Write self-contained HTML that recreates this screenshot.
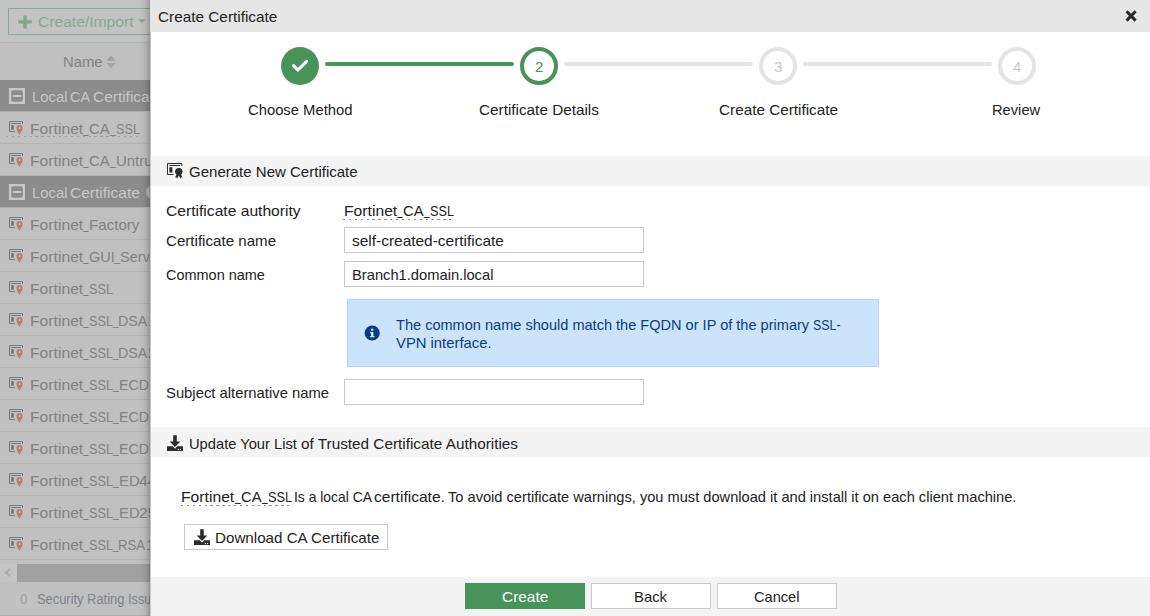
<!DOCTYPE html>
<html><head><meta charset="utf-8"><title>Create Certificate</title>
<style>
html,body{margin:0;padding:0}
body{width:1150px;height:616px;position:relative;overflow:hidden;background:#fff;font-family:"Liberation Sans",sans-serif;font-size:15px;color:#222}
.a{position:absolute}
.t{position:absolute;white-space:nowrap;transform-origin:0 0;line-height:20px;display:block}
#left{left:0;top:0;width:150px;height:616px;background:#c0c0c0;overflow:hidden}
#dlg{left:150px;top:0;width:1000px;height:616px;background:#fff}
.inp{position:absolute;left:344px;width:298px;height:24px;border:1px solid #c9c9c9;background:#fff}
.btn{position:absolute;top:583px;width:118px;height:24px;border:1px solid #c9c9c9;background:#fff}
.sech{position:absolute;left:151px;width:999px;height:30px;background:#f4f4f4}
.dot{position:absolute;height:1px;--c:#8a8a8a;background:repeating-linear-gradient(90deg,var(--c) 0,var(--c) 2.3px,transparent 2.3px,transparent 5.9px)}
</style></head><body>

<div id="left" class="a">
<div class="a" style="left:0;top:0;width:150px;height:42px;background:#c3c3c3"></div>
<div class="a" style="left:0;top:42px;width:150px;height:1px;background:#b3b3b3"></div>
<div class="a" style="left:0;top:43px;width:150px;height:37px;background:#bfbfbf"></div>
<div class="a" style="left:8px;top:8px;width:160px;height:25px;border:1px solid #89a790"></div>
<svg class="a" style="left:18px;top:14.5px" width="14" height="14" viewBox="0 0 14 14"><path d="M5.3 0.5H8.8V5.3H13.7V8.6H8.8V13.4H5.3V8.6H0.3V5.3H5.3Z" fill="#85a48f"/></svg>
<svg class="a" style="left:138px;top:18.5px" width="8" height="5" viewBox="0 0 8 5"><path d="M0 0.3H7.6L3.8 4.1Z" fill="#89a893"/></svg>
<svg class="a" style="left:106px;top:55px" width="10" height="14" viewBox="0 0 10 14"><path d="M5 0.6L9.8 5.8H0.2Z" fill="#a0a0a0"/><path d="M5 13.6L9.8 8H0.2Z" fill="#a4a4a4"/></svg>
<div class="a" style="left:0;top:80px;width:150px;height:31px;background:#8c8c8c"></div>
<div class="a" style="left:0;top:111px;width:150px;height:1px;background:#b0b0b0"></div>
<svg class="a" style="left:9px;top:88px" width="16" height="16" viewBox="0 0 16 16"><path d="M0 0H16V16H0Z M4 2.2A1.8 1.8 0 0 0 2.2 4V12A1.8 1.8 0 0 0 4 13.8H12A1.8 1.8 0 0 0 13.8 12V4A1.8 1.8 0 0 0 12 2.2Z" fill="#c8c8c8" fill-rule="evenodd"/><rect x="3.9" y="7" width="8.3" height="2" fill="#c8c8c8"/></svg>
<span class="t" style="left:32.16px;top:87.00px;color:#c8c8c8;font-size:15px;transform:scaleX(0.9910)">Local</span>
<span class="t" style="left:69.68px;top:87.00px;color:#c8c8c8;font-size:15px;transform:scaleX(0.9600)">CA</span>
<span class="t" style="left:92.83px;top:87.00px;color:#c8c8c8;font-size:15px;transform:scaleX(1.0300)">Certificate</span>
<div class="a" style="left:0;top:143px;width:150px;height:1px;background:#b5b5b5"></div>
<svg class="a" style="left:9px;top:121px" width="16" height="16" viewBox="0 0 16 16"><path d="M13.5 3V0.5H0.5V10.5H6" fill="none" stroke="#7b7b7b" stroke-width="1"/><rect x="2" y="2" width="10" height="1" fill="#7b7b7b"/><rect x="2.1" y="4.2" width="2.8" height="4.6" fill="#7b7b7b"/><path d="M10.5 3.9 a3.2 3.2 0 0 1 3.2 3.2 c0 2.2 -3.2 6.8 -3.2 6.8 c0 0 -3.2 -4.6 -3.2 -6.8 a3.2 3.2 0 0 1 3.2 -3.2z M10.5 5.9 a1.1 1.1 0 1 0 0 2.2 a1.1 1.1 0 0 0 0 -2.2z" fill="#b97e79" fill-rule="evenodd"/></svg>
<span class="t" style="left:29.79px;top:119.00px;color:#828282;font-size:15px;transform:scaleX(1.0465)">Fortinet</span>
<span class="t" style="left:83.36px;top:118.00px;color:#828282;font-size:15px;transform:scaleX(0.6514)">_</span>
<span class="t" style="left:89.16px;top:119.00px;color:#828282;font-size:15px;transform:scaleX(0.9900)">CA</span>
<span class="t" style="left:110.07px;top:118.00px;color:#828282;font-size:15px;transform:scaleX(0.6743)">_</span>
<span class="t" style="left:115.86px;top:119.00px;color:#828282;font-size:15px;transform:scaleX(0.8481)">SSL</span>
<div class="a" style="left:0;top:175px;width:150px;height:1px;background:#b5b5b5"></div>
<svg class="a" style="left:9px;top:153px" width="16" height="16" viewBox="0 0 16 16"><path d="M13.5 3V0.5H0.5V10.5H6" fill="none" stroke="#7b7b7b" stroke-width="1"/><rect x="2" y="2" width="10" height="1" fill="#7b7b7b"/><rect x="2.1" y="4.2" width="2.8" height="4.6" fill="#7b7b7b"/><path d="M10.5 3.9 a3.2 3.2 0 0 1 3.2 3.2 c0 2.2 -3.2 6.8 -3.2 6.8 c0 0 -3.2 -4.6 -3.2 -6.8 a3.2 3.2 0 0 1 3.2 -3.2z M10.5 5.9 a1.1 1.1 0 1 0 0 2.2 a1.1 1.1 0 0 0 0 -2.2z" fill="#b97e79" fill-rule="evenodd"/></svg>
<span class="t" style="left:29.79px;top:151.00px;color:#828282;font-size:15px;transform:scaleX(1.0465)">Fortinet</span>
<span class="t" style="left:83.36px;top:150.00px;color:#828282;font-size:15px;transform:scaleX(0.6514)">_</span>
<span class="t" style="left:89.16px;top:151.00px;color:#828282;font-size:15px;transform:scaleX(0.9900)">CA</span>
<span class="t" style="left:110.07px;top:150.00px;color:#828282;font-size:15px;transform:scaleX(0.6743)">_</span>
<span class="t" style="left:115.76px;top:151.00px;color:#828282;font-size:15px;transform:scaleX(0.9950)">Untrusted</span>
<div class="a" style="left:0;top:176px;width:150px;height:31px;background:#8c8c8c"></div>
<div class="a" style="left:0;top:207px;width:150px;height:1px;background:#b0b0b0"></div>
<svg class="a" style="left:9px;top:184px" width="16" height="16" viewBox="0 0 16 16"><path d="M0 0H16V16H0Z M4 2.2A1.8 1.8 0 0 0 2.2 4V12A1.8 1.8 0 0 0 4 13.8H12A1.8 1.8 0 0 0 13.8 12V4A1.8 1.8 0 0 0 12 2.2Z" fill="#c8c8c8" fill-rule="evenodd"/><rect x="3.9" y="7" width="8.3" height="2" fill="#c8c8c8"/></svg>
<span class="t" style="left:32.16px;top:183.00px;color:#c8c8c8;font-size:15px;transform:scaleX(0.9910)">Local</span>
<span class="t" style="left:70.42px;top:183.00px;color:#c8c8c8;font-size:15px;transform:scaleX(1.0348)">Certificate</span>
<div class="a" style="left:0;top:239px;width:150px;height:1px;background:#b5b5b5"></div>
<svg class="a" style="left:9px;top:217px" width="16" height="16" viewBox="0 0 16 16"><path d="M13.5 3V0.5H0.5V10.5H6" fill="none" stroke="#7b7b7b" stroke-width="1"/><rect x="2" y="2" width="10" height="1" fill="#7b7b7b"/><rect x="2.1" y="4.2" width="2.8" height="4.6" fill="#7b7b7b"/><path d="M10.5 3.9 a3.2 3.2 0 0 1 3.2 3.2 c0 2.2 -3.2 6.8 -3.2 6.8 c0 0 -3.2 -4.6 -3.2 -6.8 a3.2 3.2 0 0 1 3.2 -3.2z M10.5 5.9 a1.1 1.1 0 1 0 0 2.2 a1.1 1.1 0 0 0 0 -2.2z" fill="#b97e79" fill-rule="evenodd"/></svg>
<span class="t" style="left:29.79px;top:215.00px;color:#828282;font-size:15px;transform:scaleX(1.0465)">Fortinet</span>
<span class="t" style="left:83.36px;top:214.00px;color:#828282;font-size:15px;transform:scaleX(0.6514)">_</span>
<span class="t" style="left:89.24px;top:215.00px;color:#828282;font-size:15px;transform:scaleX(1.0072)">Factory</span>
<div class="a" style="left:0;top:271px;width:150px;height:1px;background:#b5b5b5"></div>
<svg class="a" style="left:9px;top:249px" width="16" height="16" viewBox="0 0 16 16"><path d="M13.5 3V0.5H0.5V10.5H6" fill="none" stroke="#7b7b7b" stroke-width="1"/><rect x="2" y="2" width="10" height="1" fill="#7b7b7b"/><rect x="2.1" y="4.2" width="2.8" height="4.6" fill="#7b7b7b"/><path d="M10.5 3.9 a3.2 3.2 0 0 1 3.2 3.2 c0 2.2 -3.2 6.8 -3.2 6.8 c0 0 -3.2 -4.6 -3.2 -6.8 a3.2 3.2 0 0 1 3.2 -3.2z M10.5 5.9 a1.1 1.1 0 1 0 0 2.2 a1.1 1.1 0 0 0 0 -2.2z" fill="#b97e79" fill-rule="evenodd"/></svg>
<span class="t" style="left:29.79px;top:247.00px;color:#828282;font-size:15px;transform:scaleX(1.0465)">Fortinet</span>
<span class="t" style="left:83.36px;top:246.00px;color:#828282;font-size:15px;transform:scaleX(0.6514)">_</span>
<span class="t" style="left:89.17px;top:247.00px;color:#828282;font-size:15px;transform:scaleX(0.9673)">GUI</span>
<span class="t" style="left:114.08px;top:246.00px;color:#828282;font-size:15px;transform:scaleX(0.7200)">_</span>
<span class="t" style="left:120.27px;top:247.00px;color:#828282;font-size:15px;transform:scaleX(0.9700)">Server</span>
<div class="a" style="left:0;top:303px;width:150px;height:1px;background:#b5b5b5"></div>
<svg class="a" style="left:9px;top:281px" width="16" height="16" viewBox="0 0 16 16"><path d="M13.5 3V0.5H0.5V10.5H6" fill="none" stroke="#7b7b7b" stroke-width="1"/><rect x="2" y="2" width="10" height="1" fill="#7b7b7b"/><rect x="2.1" y="4.2" width="2.8" height="4.6" fill="#7b7b7b"/><path d="M10.5 3.9 a3.2 3.2 0 0 1 3.2 3.2 c0 2.2 -3.2 6.8 -3.2 6.8 c0 0 -3.2 -4.6 -3.2 -6.8 a3.2 3.2 0 0 1 3.2 -3.2z M10.5 5.9 a1.1 1.1 0 1 0 0 2.2 a1.1 1.1 0 0 0 0 -2.2z" fill="#b97e79" fill-rule="evenodd"/></svg>
<span class="t" style="left:29.79px;top:279.00px;color:#828282;font-size:15px;transform:scaleX(1.0465)">Fortinet</span>
<span class="t" style="left:83.36px;top:278.00px;color:#828282;font-size:15px;transform:scaleX(0.6514)">_</span>
<span class="t" style="left:88.66px;top:279.00px;color:#828282;font-size:15px;transform:scaleX(0.8481)">SSL</span>
<div class="a" style="left:0;top:335px;width:150px;height:1px;background:#b5b5b5"></div>
<svg class="a" style="left:9px;top:313px" width="16" height="16" viewBox="0 0 16 16"><path d="M13.5 3V0.5H0.5V10.5H6" fill="none" stroke="#7b7b7b" stroke-width="1"/><rect x="2" y="2" width="10" height="1" fill="#7b7b7b"/><rect x="2.1" y="4.2" width="2.8" height="4.6" fill="#7b7b7b"/><path d="M10.5 3.9 a3.2 3.2 0 0 1 3.2 3.2 c0 2.2 -3.2 6.8 -3.2 6.8 c0 0 -3.2 -4.6 -3.2 -6.8 a3.2 3.2 0 0 1 3.2 -3.2z M10.5 5.9 a1.1 1.1 0 1 0 0 2.2 a1.1 1.1 0 0 0 0 -2.2z" fill="#b97e79" fill-rule="evenodd"/></svg>
<span class="t" style="left:29.79px;top:311.00px;color:#828282;font-size:15px;transform:scaleX(1.0465)">Fortinet</span>
<span class="t" style="left:83.36px;top:310.00px;color:#828282;font-size:15px;transform:scaleX(0.6514)">_</span>
<span class="t" style="left:88.66px;top:311.00px;color:#828282;font-size:15px;transform:scaleX(0.8481)">SSL</span>
<span class="t" style="left:112.67px;top:310.00px;color:#828282;font-size:15px;transform:scaleX(0.6629)">_</span>
<span class="t" style="left:118.31px;top:311.00px;color:#828282;font-size:15px;transform:scaleX(0.9525)">DSA</span>
<span class="t" style="left:147.70px;top:311.00px;color:#828282;font-size:15px;transform:scaleX(1.0400)">1024</span>
<div class="a" style="left:0;top:367px;width:150px;height:1px;background:#b5b5b5"></div>
<svg class="a" style="left:9px;top:345px" width="16" height="16" viewBox="0 0 16 16"><path d="M13.5 3V0.5H0.5V10.5H6" fill="none" stroke="#7b7b7b" stroke-width="1"/><rect x="2" y="2" width="10" height="1" fill="#7b7b7b"/><rect x="2.1" y="4.2" width="2.8" height="4.6" fill="#7b7b7b"/><path d="M10.5 3.9 a3.2 3.2 0 0 1 3.2 3.2 c0 2.2 -3.2 6.8 -3.2 6.8 c0 0 -3.2 -4.6 -3.2 -6.8 a3.2 3.2 0 0 1 3.2 -3.2z M10.5 5.9 a1.1 1.1 0 1 0 0 2.2 a1.1 1.1 0 0 0 0 -2.2z" fill="#b97e79" fill-rule="evenodd"/></svg>
<span class="t" style="left:29.79px;top:343.00px;color:#828282;font-size:15px;transform:scaleX(1.0465)">Fortinet</span>
<span class="t" style="left:83.36px;top:342.00px;color:#828282;font-size:15px;transform:scaleX(0.6514)">_</span>
<span class="t" style="left:88.66px;top:343.00px;color:#828282;font-size:15px;transform:scaleX(0.8481)">SSL</span>
<span class="t" style="left:112.67px;top:342.00px;color:#828282;font-size:15px;transform:scaleX(0.6629)">_</span>
<span class="t" style="left:118.31px;top:343.00px;color:#828282;font-size:15px;transform:scaleX(0.9525)">DSA</span>
<span class="t" style="left:147.82px;top:343.00px;color:#828282;font-size:15px;transform:scaleX(1.0400)">2048</span>
<div class="a" style="left:0;top:399px;width:150px;height:1px;background:#b5b5b5"></div>
<svg class="a" style="left:9px;top:377px" width="16" height="16" viewBox="0 0 16 16"><path d="M13.5 3V0.5H0.5V10.5H6" fill="none" stroke="#7b7b7b" stroke-width="1"/><rect x="2" y="2" width="10" height="1" fill="#7b7b7b"/><rect x="2.1" y="4.2" width="2.8" height="4.6" fill="#7b7b7b"/><path d="M10.5 3.9 a3.2 3.2 0 0 1 3.2 3.2 c0 2.2 -3.2 6.8 -3.2 6.8 c0 0 -3.2 -4.6 -3.2 -6.8 a3.2 3.2 0 0 1 3.2 -3.2z M10.5 5.9 a1.1 1.1 0 1 0 0 2.2 a1.1 1.1 0 0 0 0 -2.2z" fill="#b97e79" fill-rule="evenodd"/></svg>
<span class="t" style="left:29.79px;top:375.00px;color:#828282;font-size:15px;transform:scaleX(1.0465)">Fortinet</span>
<span class="t" style="left:83.36px;top:374.00px;color:#828282;font-size:15px;transform:scaleX(0.6514)">_</span>
<span class="t" style="left:88.66px;top:375.00px;color:#828282;font-size:15px;transform:scaleX(0.8481)">SSL</span>
<span class="t" style="left:112.67px;top:374.00px;color:#828282;font-size:15px;transform:scaleX(0.6629)">_</span>
<span class="t" style="left:118.72px;top:375.00px;color:#828282;font-size:15px;transform:scaleX(0.9479)">ECD</span>
<span class="t" style="left:148.62px;top:375.00px;color:#828282;font-size:15px;transform:scaleX(0.9000)">SA256</span>
<div class="a" style="left:0;top:431px;width:150px;height:1px;background:#b5b5b5"></div>
<svg class="a" style="left:9px;top:409px" width="16" height="16" viewBox="0 0 16 16"><path d="M13.5 3V0.5H0.5V10.5H6" fill="none" stroke="#7b7b7b" stroke-width="1"/><rect x="2" y="2" width="10" height="1" fill="#7b7b7b"/><rect x="2.1" y="4.2" width="2.8" height="4.6" fill="#7b7b7b"/><path d="M10.5 3.9 a3.2 3.2 0 0 1 3.2 3.2 c0 2.2 -3.2 6.8 -3.2 6.8 c0 0 -3.2 -4.6 -3.2 -6.8 a3.2 3.2 0 0 1 3.2 -3.2z M10.5 5.9 a1.1 1.1 0 1 0 0 2.2 a1.1 1.1 0 0 0 0 -2.2z" fill="#b97e79" fill-rule="evenodd"/></svg>
<span class="t" style="left:29.79px;top:407.00px;color:#828282;font-size:15px;transform:scaleX(1.0465)">Fortinet</span>
<span class="t" style="left:83.36px;top:406.00px;color:#828282;font-size:15px;transform:scaleX(0.6514)">_</span>
<span class="t" style="left:88.66px;top:407.00px;color:#828282;font-size:15px;transform:scaleX(0.8481)">SSL</span>
<span class="t" style="left:112.67px;top:406.00px;color:#828282;font-size:15px;transform:scaleX(0.6629)">_</span>
<span class="t" style="left:118.72px;top:407.00px;color:#828282;font-size:15px;transform:scaleX(0.9479)">ECD</span>
<span class="t" style="left:148.62px;top:407.00px;color:#828282;font-size:15px;transform:scaleX(0.9000)">SA384</span>
<div class="a" style="left:0;top:463px;width:150px;height:1px;background:#b5b5b5"></div>
<svg class="a" style="left:9px;top:441px" width="16" height="16" viewBox="0 0 16 16"><path d="M13.5 3V0.5H0.5V10.5H6" fill="none" stroke="#7b7b7b" stroke-width="1"/><rect x="2" y="2" width="10" height="1" fill="#7b7b7b"/><rect x="2.1" y="4.2" width="2.8" height="4.6" fill="#7b7b7b"/><path d="M10.5 3.9 a3.2 3.2 0 0 1 3.2 3.2 c0 2.2 -3.2 6.8 -3.2 6.8 c0 0 -3.2 -4.6 -3.2 -6.8 a3.2 3.2 0 0 1 3.2 -3.2z M10.5 5.9 a1.1 1.1 0 1 0 0 2.2 a1.1 1.1 0 0 0 0 -2.2z" fill="#b97e79" fill-rule="evenodd"/></svg>
<span class="t" style="left:29.79px;top:439.00px;color:#828282;font-size:15px;transform:scaleX(1.0465)">Fortinet</span>
<span class="t" style="left:83.36px;top:438.00px;color:#828282;font-size:15px;transform:scaleX(0.6514)">_</span>
<span class="t" style="left:88.66px;top:439.00px;color:#828282;font-size:15px;transform:scaleX(0.8481)">SSL</span>
<span class="t" style="left:112.67px;top:438.00px;color:#828282;font-size:15px;transform:scaleX(0.6629)">_</span>
<span class="t" style="left:118.72px;top:439.00px;color:#828282;font-size:15px;transform:scaleX(0.9479)">ECD</span>
<span class="t" style="left:148.62px;top:439.00px;color:#828282;font-size:15px;transform:scaleX(0.9000)">SA521</span>
<div class="a" style="left:0;top:495px;width:150px;height:1px;background:#b5b5b5"></div>
<svg class="a" style="left:9px;top:473px" width="16" height="16" viewBox="0 0 16 16"><path d="M13.5 3V0.5H0.5V10.5H6" fill="none" stroke="#7b7b7b" stroke-width="1"/><rect x="2" y="2" width="10" height="1" fill="#7b7b7b"/><rect x="2.1" y="4.2" width="2.8" height="4.6" fill="#7b7b7b"/><path d="M10.5 3.9 a3.2 3.2 0 0 1 3.2 3.2 c0 2.2 -3.2 6.8 -3.2 6.8 c0 0 -3.2 -4.6 -3.2 -6.8 a3.2 3.2 0 0 1 3.2 -3.2z M10.5 5.9 a1.1 1.1 0 1 0 0 2.2 a1.1 1.1 0 0 0 0 -2.2z" fill="#b97e79" fill-rule="evenodd"/></svg>
<span class="t" style="left:29.79px;top:471.00px;color:#828282;font-size:15px;transform:scaleX(1.0465)">Fortinet</span>
<span class="t" style="left:83.36px;top:470.00px;color:#828282;font-size:15px;transform:scaleX(0.6514)">_</span>
<span class="t" style="left:88.66px;top:471.00px;color:#828282;font-size:15px;transform:scaleX(0.8481)">SSL</span>
<span class="t" style="left:112.67px;top:470.00px;color:#828282;font-size:15px;transform:scaleX(0.6629)">_</span>
<span class="t" style="left:118.66px;top:471.00px;color:#828282;font-size:15px;transform:scaleX(0.9920)">ED</span>
<span class="t" style="left:138.84px;top:471.00px;color:#828282;font-size:15px;transform:scaleX(1.0400)">448</span>
<div class="a" style="left:0;top:527px;width:150px;height:1px;background:#b5b5b5"></div>
<svg class="a" style="left:9px;top:505px" width="16" height="16" viewBox="0 0 16 16"><path d="M13.5 3V0.5H0.5V10.5H6" fill="none" stroke="#7b7b7b" stroke-width="1"/><rect x="2" y="2" width="10" height="1" fill="#7b7b7b"/><rect x="2.1" y="4.2" width="2.8" height="4.6" fill="#7b7b7b"/><path d="M10.5 3.9 a3.2 3.2 0 0 1 3.2 3.2 c0 2.2 -3.2 6.8 -3.2 6.8 c0 0 -3.2 -4.6 -3.2 -6.8 a3.2 3.2 0 0 1 3.2 -3.2z M10.5 5.9 a1.1 1.1 0 1 0 0 2.2 a1.1 1.1 0 0 0 0 -2.2z" fill="#b97e79" fill-rule="evenodd"/></svg>
<span class="t" style="left:29.79px;top:503.00px;color:#828282;font-size:15px;transform:scaleX(1.0465)">Fortinet</span>
<span class="t" style="left:83.36px;top:502.00px;color:#828282;font-size:15px;transform:scaleX(0.6514)">_</span>
<span class="t" style="left:88.66px;top:503.00px;color:#828282;font-size:15px;transform:scaleX(0.8481)">SSL</span>
<span class="t" style="left:112.67px;top:502.00px;color:#828282;font-size:15px;transform:scaleX(0.6629)">_</span>
<span class="t" style="left:118.66px;top:503.00px;color:#828282;font-size:15px;transform:scaleX(0.9920)">ED</span>
<span class="t" style="left:138.52px;top:503.00px;color:#828282;font-size:15px;transform:scaleX(1.0400)">25519</span>
<div class="a" style="left:0;top:559px;width:150px;height:1px;background:#b5b5b5"></div>
<svg class="a" style="left:9px;top:537px" width="16" height="16" viewBox="0 0 16 16"><path d="M13.5 3V0.5H0.5V10.5H6" fill="none" stroke="#7b7b7b" stroke-width="1"/><rect x="2" y="2" width="10" height="1" fill="#7b7b7b"/><rect x="2.1" y="4.2" width="2.8" height="4.6" fill="#7b7b7b"/><path d="M10.5 3.9 a3.2 3.2 0 0 1 3.2 3.2 c0 2.2 -3.2 6.8 -3.2 6.8 c0 0 -3.2 -4.6 -3.2 -6.8 a3.2 3.2 0 0 1 3.2 -3.2z M10.5 5.9 a1.1 1.1 0 1 0 0 2.2 a1.1 1.1 0 0 0 0 -2.2z" fill="#b97e79" fill-rule="evenodd"/></svg>
<span class="t" style="left:29.79px;top:535.00px;color:#828282;font-size:15px;transform:scaleX(1.0465)">Fortinet</span>
<span class="t" style="left:83.36px;top:534.00px;color:#828282;font-size:15px;transform:scaleX(0.6514)">_</span>
<span class="t" style="left:88.66px;top:535.00px;color:#828282;font-size:15px;transform:scaleX(0.8481)">SSL</span>
<span class="t" style="left:112.67px;top:534.00px;color:#828282;font-size:15px;transform:scaleX(0.6629)">_</span>
<span class="t" style="left:118.20px;top:535.00px;color:#828282;font-size:15px;transform:scaleX(0.8814)">RSA</span>
<span class="t" style="left:145.90px;top:535.00px;color:#828282;font-size:15px;transform:scaleX(1.0400)">1024</span>
<div class="a" style="left:146px;top:185px;width:20px;height:14px;border-radius:7px;background:#bababa"></div>
<div class="dot" style="left:6px;top:136px;width:134px;--c:#a0a0a0"></div>
<div class="a" style="left:0;top:564px;width:17px;height:18px;background:#c4c4c4"></div>
<div class="a" style="left:17px;top:564px;width:140px;height:18px;background:#a1a1a1"></div>
<svg class="a" style="left:4px;top:568px" width="8" height="9" viewBox="0 0 8 9"><path d="M6.3 0.9L1.7 4.6L6.3 8.3" fill="none" stroke="#a8a8a8" stroke-width="1.9"/></svg>
<div class="a" style="left:15px;top:591px;width:17px;height:17px;border-radius:9px;background:#c3c3c3"></div>
<span class="t" style="left:19.6px;top:589.3px;color:#a09c98;font-size:14px;transform:scaleX(.95)">0</span>
<span class="t" style="left:36.81px;top:589.00px;color:#7e838a;font-size:14px;transform:scaleX(0.9200)">Security Rating Issues</span>
<span class="t" style="left:38.42px;top:12.00px;color:#89a893;font-size:15px;transform:scaleX(1.0418)">Create/Import</span>
<span class="t" style="left:62.66px;top:52.00px;color:#828282;font-size:15px;transform:scaleX(0.9895)">Name</span>
<div class="a" style="left:0;top:615px;width:150px;height:1px;background:#b0b0b0"></div>
<div class="a" style="left:138px;top:0;width:12px;height:616px;background:linear-gradient(90deg,rgba(0,0,0,0) 0%,rgba(0,0,0,.03) 45%,rgba(0,0,0,.1) 75%,rgba(0,0,0,.24) 100%)"></div>
</div>
<div id="dlg" class="a"></div>
<div class="a" style="left:150px;top:0;width:1px;height:616px;background:#c6c6c6"></div>
<div class="a" style="left:150px;top:0;width:1000px;height:32px;background:#e6e6e6"></div>
<span class="t" style="left:158.03px;top:7.00px;color:#222;font-size:15px;transform:scaleX(1.0221)">Create Certificate</span>
<svg class="a" style="left:1124px;top:9px" width="14" height="14" viewBox="0 0 14 14"><path d="M2.6 2.2L11.6 11.6M11.6 2.2L2.6 11.6" stroke="#2a2a2a" stroke-width="3" fill="none"/></svg>
<div class="a" style="left:325px;top:62px;width:189px;height:4px;border-radius:2px;background:#48935a"></div>
<div class="a" style="left:564px;top:62px;width:189px;height:4px;border-radius:2px;background:#e4e4e4"></div>
<div class="a" style="left:803px;top:62px;width:189px;height:4px;border-radius:2px;background:#e4e4e4"></div>
<div class="a" style="left:281px;top:47px;width:38px;height:38px;border-radius:19px;background:#48935a"></div>
<svg class="a" style="left:291px;top:59px" width="18" height="14" viewBox="0 0 18 14"><path d="M2.5 6.6L6.9 11L15.6 2.4" fill="none" stroke="#fff" stroke-width="3.1" stroke-linecap="round" stroke-linejoin="round"/></svg>
<div class="a" style="left:520px;top:47px;width:30px;height:30px;border-radius:19px;border:4px solid #48935a;background:#fff"></div>
<div class="a" style="left:759px;top:47px;width:30px;height:30px;border-radius:19px;border:4px solid #e4e4e4;background:#fff"></div>
<div class="a" style="left:998px;top:47px;width:30px;height:30px;border-radius:19px;border:4px solid #e4e4e4;background:#fff"></div>
<span class="t" style="left:535px;top:57px;color:#48935a;font-size:15px;">2</span>
<span class="t" style="left:774px;top:57px;color:#c9c9c9;font-size:15px;">3</span>
<span class="t" style="left:1013px;top:57px;color:#c9c9c9;font-size:15px;">4</span>
<span class="t" style="left:247.96px;top:100.00px;color:#222;font-size:15px;transform:scaleX(0.9861)">Choose Method</span>
<span class="t" style="left:479.23px;top:100.00px;color:#222;font-size:15px;transform:scaleX(1.0202)">Certificate Details</span>
<span class="t" style="left:718.54px;top:100.00px;color:#222;font-size:15px;transform:scaleX(1.0195)">Create Certificate</span>
<span class="t" style="left:992.38px;top:100.00px;color:#222;font-size:15px;transform:scaleX(0.9792)">Review</span>
<div class="sech" style="top:156px"></div>
<svg class="a" style="left:167.0px;top:163.0px" width="17" height="17" viewBox="0 0 17 17"><path d="M14.8 3V0.5H0.5V11.5H6.6" fill="none" stroke="#2b2b2b" stroke-width="1"/><rect x="2.4" y="2" width="10.6" height="1" fill="#2b2b2b"/><rect x="2.4" y="4.2" width="3" height="5.4" fill="#2b2b2b"/><circle cx="11.8" cy="8.6" r="3.7" fill="#2b2b2b"/><path d="M10 11 L8 14.4 L9.5 14.3 L10 15.8 L11.8 12.4 L13.6 15.8 L14.1 14.3 L15.6 14.4 L13.6 11Z" fill="#2b2b2b"/></svg>
<span class="t" style="left:189.05px;top:162.00px;color:#222;font-size:15px;transform:scaleX(1.0012)">Generate New Certificate</span>
<span class="t" style="left:165.72px;top:201.00px;color:#222;font-size:15px;transform:scaleX(1.0420)">Certificate authority</span>
<span class="t" style="left:165.74px;top:231.00px;color:#222;font-size:15px;transform:scaleX(1.0079)">Certificate name</span>
<span class="t" style="left:165.78px;top:265.00px;color:#222;font-size:15px;transform:scaleX(0.9644)">Common name</span>
<span class="t" style="left:165.76px;top:383.00px;color:#222;font-size:15px;transform:scaleX(0.9875)">Subject alternative name</span>
<span class="t" style="left:343.59px;top:201.00px;color:#222;font-size:15px;transform:scaleX(1.0465)">Fortinet</span>
<span class="t" style="left:397.16px;top:200.00px;color:#222;font-size:15px;transform:scaleX(0.6514)">_</span>
<span class="t" style="left:402.96px;top:201.00px;color:#222;font-size:15px;transform:scaleX(0.9900)">CA</span>
<span class="t" style="left:423.87px;top:200.00px;color:#222;font-size:15px;transform:scaleX(0.6743)">_</span>
<span class="t" style="left:429.66px;top:201.00px;color:#222;font-size:15px;transform:scaleX(0.8481)">SSL</span>
<div class="dot" style="left:343px;top:219px;width:110px"></div>
<div class="inp" style="top:227px"></div><div class="inp" style="top:261px"></div><div class="inp" style="top:379px"></div>
<span class="t" style="left:351.89px;top:231.00px;color:#222;font-size:15px;transform:scaleX(1.0297)">self-created-certificate</span>
<span class="t" style="left:352.07px;top:265.00px;color:#222;font-size:15px;transform:scaleX(0.9803)">Branch1.domain.local</span>
<div class="a" style="left:347px;top:299px;width:530px;height:66px;border:1px solid #b3d4f3;background:#cce4fb"></div>
<svg class="a" style="left:364px;top:325px" width="16" height="16" viewBox="0 0 16 16"><circle cx="8.2" cy="8.0" r="7.6" fill="#063d80"/><rect x="7.1" y="3.7" width="2.2" height="2" fill="#dcecfc"/><path d="M6.1 7H9.4V10.9H10.4V12.2H6.1V10.9H7.1V8.2H6.1Z" fill="#dcecfc"/></svg>
<span class="t" style="left:396.16px;top:315.00px;color:#0a3c7d;font-size:15px;transform:scaleX(0.9704)">The common name should match the FQDN or IP of the primary</span>
<span class="t" style="left:812.68px;top:315.00px;color:#0a3c7d;font-size:15px;transform:scaleX(0.8281)">SSL-</span>
<span class="t" style="left:396.15px;top:333.00px;color:#0a3c7d;font-size:15px;transform:scaleX(0.9874)">VPN interface.</span>
<div class="sech" style="top:427px"></div>
<svg class="a" style="left:167.0px;top:435.0px" width="16" height="16" viewBox="0 0 16 16"><path d="M6.2 0.2H9.8V6.4H13.3L8 12.1L2.7 6.4H6.2Z" fill="#2b2b2b"/><path d="M0 11.3H5.8L8 13.7L10.2 11.3H16V16H0Z M11.4 13.8a.7.7 0 1 0 0 1.4a.7.7 0 0 0 0-1.4Z M13.5 13.8a.7.7 0 1 0 0 1.4a.7.7 0 0 0 0-1.4Z" fill="#2b2b2b" fill-rule="evenodd"/></svg>
<span class="t" style="left:188.67px;top:434.00px;color:#222;font-size:15px;transform:scaleX(0.9802)">Update Your List</span>
<span class="t" style="left:300.79px;top:434.00px;color:#222;font-size:15px;transform:scaleX(1.0208)">of Trusted Certificate Authorities</span>
<span class="t" style="left:181.49px;top:487.00px;color:#222;font-size:15px;transform:scaleX(1.0465)">Fortinet</span>
<span class="t" style="left:235.06px;top:486.00px;color:#222;font-size:15px;transform:scaleX(0.6514)">_</span>
<span class="t" style="left:240.86px;top:487.00px;color:#222;font-size:15px;transform:scaleX(0.9900)">CA</span>
<span class="t" style="left:261.77px;top:486.00px;color:#222;font-size:15px;transform:scaleX(0.6743)">_</span>
<span class="t" style="left:267.56px;top:487.00px;color:#222;font-size:15px;transform:scaleX(0.8481)">SSL</span>
<span class="t" style="left:293.64px;top:487.00px;color:#222;font-size:15px;transform:scaleX(0.9257)">Is a local CA</span>
<span class="t" style="left:374.12px;top:487.00px;color:#222;font-size:15px;transform:scaleX(1.0370)">certificate.</span>
<span class="t" style="left:447.76px;top:487.00px;color:#222;font-size:15px;transform:scaleX(0.9753)">To avoid certificate warnings, you must download it and install it on each client machine.</span>
<div class="dot" style="left:181.2px;top:505px;width:110.4px"></div>
<div class="a" style="left:184px;top:524px;width:202px;height:24px;border:1px solid #c9c9c9;background:#fff"></div>
<svg class="a" style="left:194.0px;top:529.0px" width="16" height="16" viewBox="0 0 16 16"><path d="M6.2 0.2H9.8V6.4H13.3L8 12.1L2.7 6.4H6.2Z" fill="#2b2b2b"/><path d="M0 11.3H5.8L8 13.7L10.2 11.3H16V16H0Z M11.4 13.8a.7.7 0 1 0 0 1.4a.7.7 0 0 0 0-1.4Z M13.5 13.8a.7.7 0 1 0 0 1.4a.7.7 0 0 0 0-1.4Z" fill="#2b2b2b" fill-rule="evenodd"/></svg>
<span class="t" style="left:215.24px;top:528.00px;color:#222;font-size:15px;transform:scaleX(1.0109)">Download CA Certificate</span>
<div class="a" style="left:151px;top:577px;width:999px;height:39px;background:#f3f3f3"></div>
<div class="a" style="left:465px;top:583px;width:120px;height:26px;background:#48935a"></div>
<div class="btn" style="left:591px"></div><div class="btn" style="left:717px"></div>
<span class="t" style="left:502.03px;top:587.00px;color:#fff;font-size:15px;transform:scaleX(1.0276)">Create</span>
<span class="t" style="left:634.26px;top:587.00px;color:#222;font-size:15px;transform:scaleX(0.9906)">Back</span>
<span class="t" style="left:754.17px;top:587.00px;color:#222;font-size:15px;transform:scaleX(0.9733)">Cancel</span>
</body></html>
